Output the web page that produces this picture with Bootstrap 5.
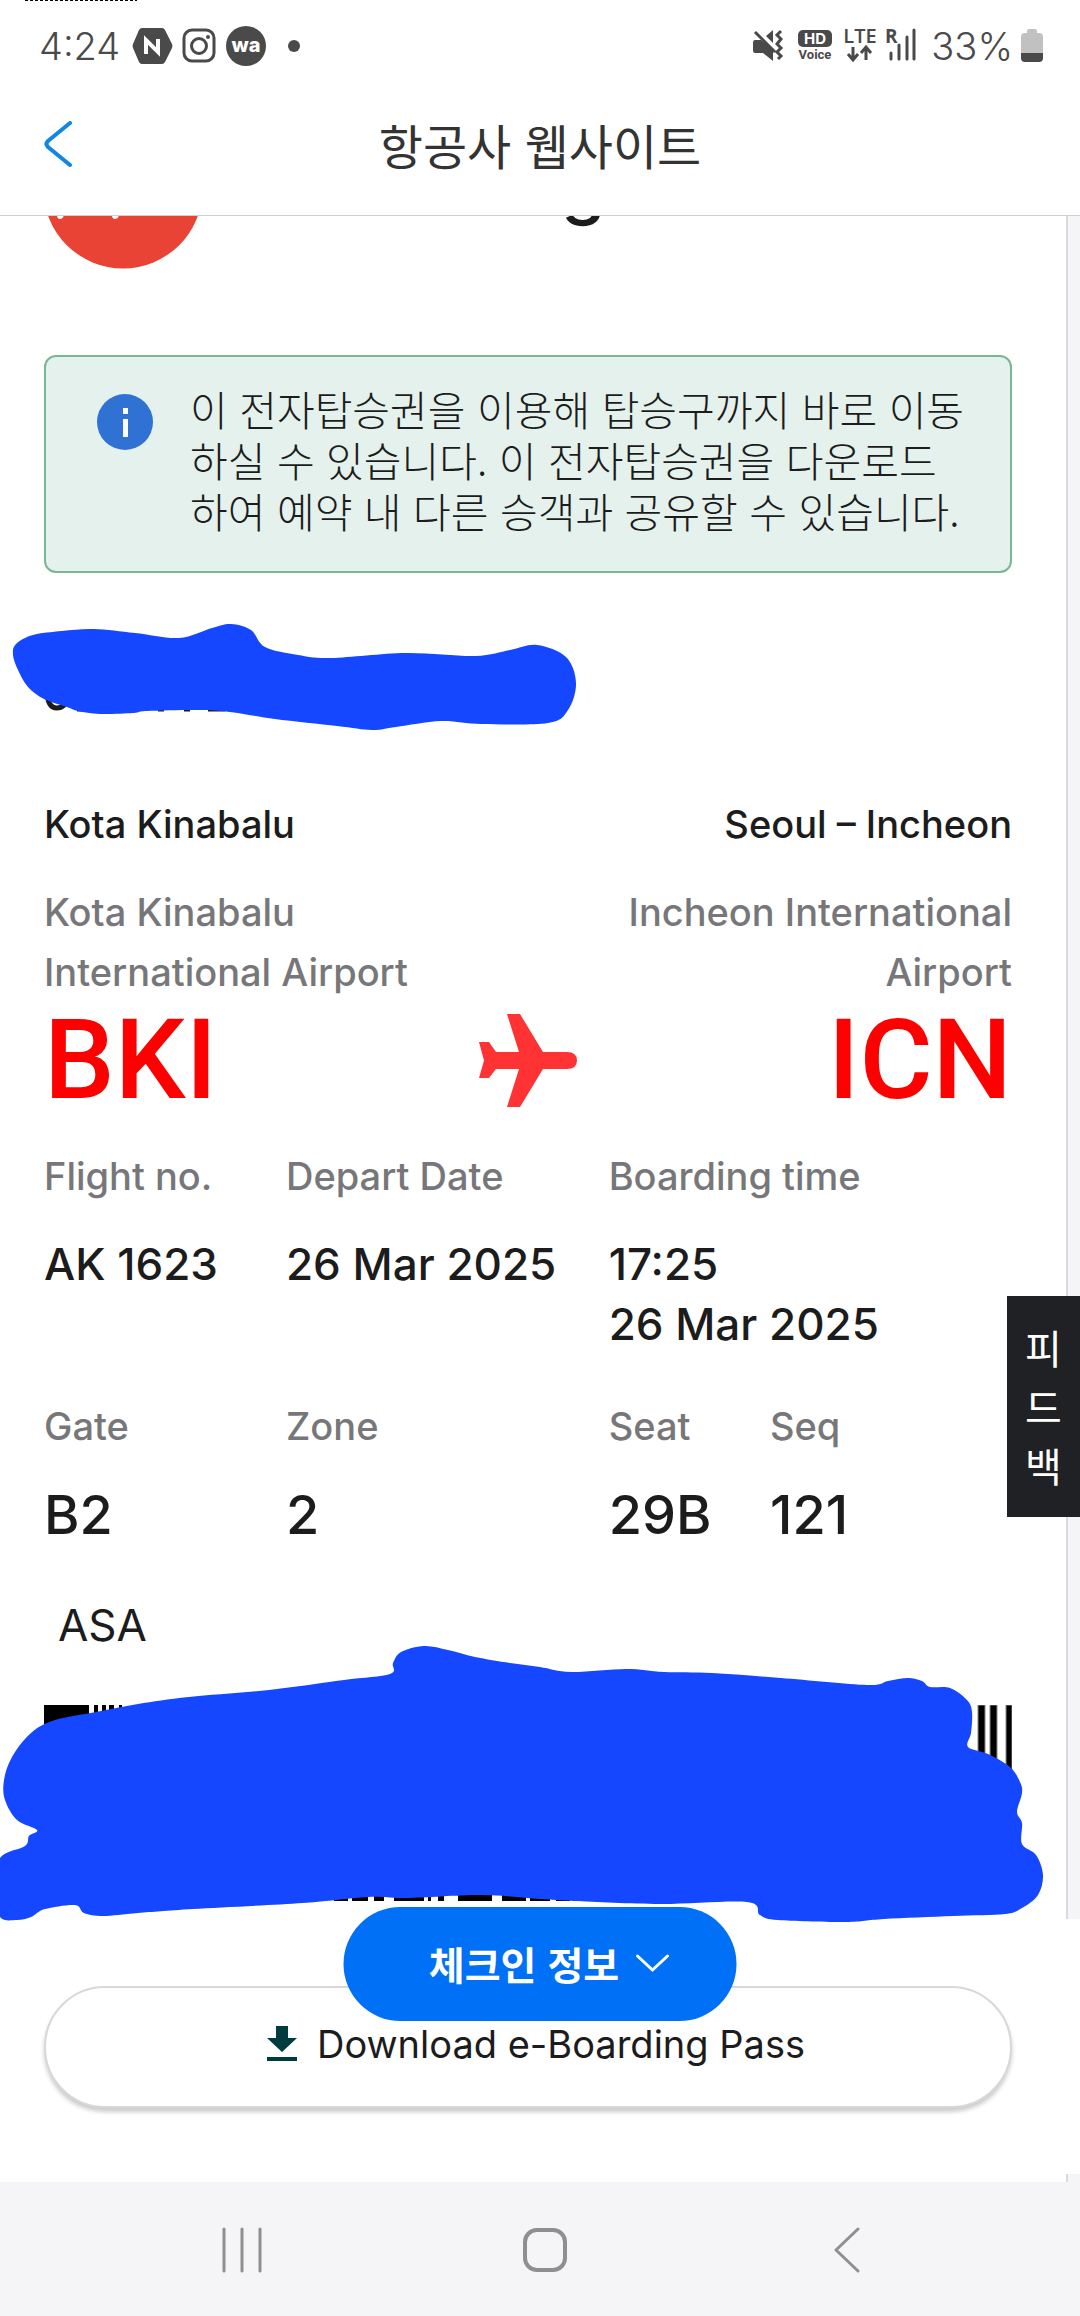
<!DOCTYPE html>
<html lang="ko">
<head>
<meta charset="utf-8">
<meta name="viewport" content="width=device-width, initial-scale=1">
<title>항공사 웹사이트</title>
<link href="https://cdn.jsdelivr.net/npm/bootstrap@5.3.0/dist/css/bootstrap.min.css" rel="stylesheet">
<style>
body{font-family:Inter,"Noto Sans CJK KR",sans-serif;font-size:38px;line-height:60px;color:#1c1c1c;background:#fff;overflow-x:hidden}
svg{display:block;flex:none}
.status-row{height:92px;padding:0 37px 0 39px;color:#4a4a4a;position:relative}
.status-text{font-size:38px;font-weight:300;line-height:48px}
.status-gap{gap:12px}
.edge-ticks{position:absolute;left:25px;top:0;width:112px;height:1px;background:repeating-linear-gradient(90deg,#000 0 3px,#fff 3px 5px)}
.title-row{height:124px;border-bottom:1px solid #d0d0d2;padding:0 44px 20px}
.title-row h1{font-family:"Noto Sans CJK KR",sans-serif;font-size:48px;font-weight:400;line-height:60px;color:#333}
.back-btn{width:28px}
.page-body{overflow:hidden;padding-right:12px;background:#f5f5f7}
.sheet{background:#fff;border-right:2px solid #d9d9de;padding:0 54px 8px 44px}
.brand-row{height:140px}
.brand-row svg{margin-top:-1px}
.brand-tail{font-size:72px;font-weight:500;line-height:60px;margin-top:-61px;position:absolute;left:561px;top:0}
.note-box{background:#e5f1ec;border:2px solid #77b796;border-radius:12px;padding:26px 30px 34px 50px;min-height:218px}
.note-box svg{margin-top:10px}
.note-box p{font-family:"Noto Sans CJK KR",sans-serif;font-size:41px;font-weight:300;line-height:51px;margin-left:36px;white-space:nowrap}
.guest-name{height:144px;margin:77px 0 0}
.soft{color:#77777a}
.med{font-weight:500}
.air-code{font-family:Roboto,sans-serif;font-size:112px;font-weight:500;line-height:116px;color:#f00}
.route{margin-bottom:28px}
.val{font-size:44px;font-weight:500;line-height:60px}
.val-lg{font-size:54px;font-weight:500;line-height:62px}
.gap-28{margin-top:28px}
.gap-42{margin-top:42px}
.asa{font-size:44px;padding-left:14px;margin:49px 0 50px}
.bars{height:196px}
.dock{margin:18px -68px 0 -44px;padding:67px 68px 67px 44px;background:#fff;position:relative;height:255px}
.dl-btn{height:122px;gap:20px;border:2px solid #d8d8da;border-radius:61px;background:#fff;box-shadow:0 4px 4px rgba(0,0,0,.2);color:#1c1c1c;padding:0 0 6px 16px;font-size:38px}
.info-btn{position:absolute;left:50%;top:-12px;transform:translateX(-50%);width:393px;height:114px;border:0;border-radius:57px;background:#0070f7;color:#fff;font-family:"Noto Sans CJK KR",sans-serif;font-weight:700;font-size:39px;padding:0 0 2px 18px;z-index:3}
.feedback{position:absolute;right:0;top:1080px;width:73px;height:221px;border:0;padding:22px 0;background:#202124;color:#fff;font-family:"Noto Sans CJK KR",sans-serif;font-size:40px;line-height:59px;z-index:3}
.marker{position:absolute;left:0;top:0;z-index:2;pointer-events:none}
.sys-nav{height:135px;background:#f5f5f8;padding:0 210px 0 219px}
.sys-nav button,.back-btn{border:0;background:none;padding:0}
</style>
<script src="https://cdn.jsdelivr.net/npm/bootstrap@5.3.0/dist/js/bootstrap.bundle.min.js"></script>
</head>
<body>
<div class="d-flex flex-column min-vh-100 position-relative">
<div class="status-row d-flex align-items-center justify-content-between">
<div class="edge-ticks"></div>
<div class="d-flex align-items-center status-gap">
<span class="status-text">4:24</span>
<svg width="174" height="42" viewBox="0 0 174 42">
<path fill="#4a4a4a" d="M10 3h20q2 0 3 2l7 14q1 2 0 4l-7 14q-1 2-3 2H10q-2 0-3-2L1 23q-1-2 0-4L7 5q1-2 3-2z"/>
<path d="M14 29V15l12 12V14" fill="none" stroke="#fff" stroke-width="4"/>
<rect x="52" y="5" width="30" height="31" rx="8" fill="none" stroke="#4a4a4a" stroke-width="3"/><circle cx="67" cy="21" r="7.500" fill="none" stroke="#4a4a4a" stroke-width="3"/><circle cx="76" cy="12" r="2" fill="#4a4a4a"/>
<circle cx="114" cy="21" r="20" fill="#4a4a4a"/><text x="114" y="27" text-anchor="middle" font-size="20" font-weight="800" fill="#fff">wa</text>
<circle cx="162" cy="21" r="6" fill="#4a4a4a"/>
</svg>
</div>
<div class="d-flex align-items-center status-gap">
<svg width="166" height="36" viewBox="0 0 166 36" fill="#4a4a4a">
<path d="M2 12h6l12 10v11L10 25H2q-2 0-2-3v-7q0-3 2-3zM13 8l7-6v13z"/>
<path d="M2 4l20 20M28 3l-4 4 4 4-4 5 4 4-4 4 4 4-3 3" fill="none" stroke="#4a4a4a" stroke-width="3"/>
<rect x="45" y="2" width="34" height="17" rx="5"/><text x="62" y="16" text-anchor="middle" font-size="15" font-weight="700" fill="#fff">HD</text>
<text x="62" y="31" text-anchor="middle" font-size="13" font-weight="700" style="font-family:Roboto,sans-serif">Voice</text>
<text x="107" y="15" text-anchor="middle" font-size="20" font-weight="600" style="font-family:'Open Sans',sans-serif">LTE</text>
<path d="M100 19v12M95 26l5 6 5-6M113 32V20M108 25l5-6 5 6" fill="none" stroke="#4a4a4a" stroke-width="3"/>
<text x="132" y="15" font-size="19" font-weight="700" style="font-family:'Open Sans',sans-serif">R</text>
<path d="M138 25v6M146 17v14M154 9v22M161 2v29" stroke="#4a4a4a" stroke-width="3" stroke-linecap="round"/>
</svg>
<div class="d-flex align-items-center gap-2"><span class="status-text">33%</span>
<svg width="22" height="34" viewBox="0 0 22 34"><path d="M6 4V2q0-2 2-2h6q2 0 2 2v2h2q4 0 4 4v18H0V8q0-4 4-4z" fill="#c1c1c1"/><path d="M0 24h22v5q0 4-4 4H4q-4 0-4-4z" fill="#4a4a4a"/></svg></div>
</div>
</div>
<header class="title-row d-flex align-items-center justify-content-between">
<button class="back-btn" aria-label="뒤로"><svg width="28" height="46" viewBox="0 0 28 46"><path d="M26 2L4 20q-3 3 0 6l22 18" fill="none" stroke="#1187e5" stroke-width="4" stroke-linecap="round"/></svg></button>
<h1 class="m-0">항공사 웹사이트</h1>
<span class="back-btn"></span>
</header>
<main class="page-body position-relative">
<div class="sheet">
<div class="brand-row"><svg width="160" height="54" viewBox="0 0 160 54"><circle cx="79" cy="-26" r="79.500" fill="#e84335"/><path d="M13 0h7q-1 4-4 4t-3-4zM68 0h7q-1 4-4 4t-3-4z" fill="#fff"/></svg><span class="brand-tail">g</span></div>
<div class="note-box d-flex align-items-start">
<svg width="58" height="58" viewBox="0 0 58 58"><circle cx="29" cy="29" r="28" fill="#2f72d3"/><path d="M27 15h5v6h-5zM27 26h5v18h-5z" fill="#fff"/></svg>
<p class="mb-0">이 전자탑승권을 이용해 탑승구까지 바로 이동<br>하실 수 있습니다. 이 전자탑승권을 다운로드<br>하여 예약 내 다른 승객과 공유할 수 있습니다.</p>
</div>
<div class="guest-name"><svg width="200" height="66" viewBox="0 0 200 66"><path d="M3 40q0 18 10 18 8 0 10-10M33 59h6M114 59h6M140 59h6M164 59h17" fill="none" stroke="#1c1c1c" stroke-width="5"/></svg></div>
<div class="d-flex justify-content-between med"><span>Kota Kinabalu</span><span>Seoul – Incheon</span></div>
<div class="d-flex justify-content-between med soft gap-28"><span>Kota Kinabalu<br>International Airport</span><span class="text-end">Incheon International<br>Airport</span></div>
<div class="route d-flex align-items-center">
<span class="air-code col">BKI</span>
<svg width="98" height="93" viewBox="0 0 98 93"><path fill="#f33" d="M0 28h10l7 10h23L28 0h13l23 38h24q10 0 10 8.500T88 55H64L41 93H28l12-38H17l-7 9H0l5-17.500z"/></svg>
<span class="air-code col text-end">ICN</span>
</div>
<div class="row gx-0">
<div class="col-3"><div class="soft med">Flight no.</div><div class="val gap-28">AK 1623</div></div>
<div class="col-4"><div class="soft med">Depart Date</div><div class="val gap-28">26 Mar 2025</div></div>
<div class="col-5"><div class="soft med">Boarding time</div><div class="val gap-28">17:25<br>26 Mar 2025</div></div>
</div>
<div class="row gx-0 gap-42">
<div class="col-3"><div class="soft med">Gate</div><div class="val-lg gap-28">B2</div></div>
<div class="col-4"><div class="soft med">Zone</div><div class="val-lg gap-28">2</div></div>
<div class="col-2"><div class="soft med">Seat</div><div class="val-lg gap-28">29B</div></div>
<div class="col-3"><div class="soft med">Seq</div><div class="val-lg gap-28">121</div></div>
</div>
<div class="asa">ASA</div>
<svg class="bars w-100" viewBox="0 0 968 196" preserveAspectRatio="none"><path d="M0 0h45v40H0zM50 0h4v30h-4zM58 0h4v30h-4zM65 0h5v30h-5zM75 0h3v30h-3zM290 180h14v16h-14zM308 180h16v16h-16zM330 180h10v16h-10zM350 180h30v16h-30zM384 180h3v16h-3zM394 180h6v16h-6zM414 180h34v16h-34zM458 180h24v16h-24zM486 180h20v16h-20zM512 180h14v16h-14z"/><path d="M934 0h7v80h-7zM946 0h7v80h-7zM962 0h6v80h-6z" stroke="#888" stroke-width="1"/></svg>
<div class="dock">
<button class="info-btn d-flex align-items-center justify-content-center"><span>체크인 정보</span><svg class="ms-3" width="34" height="20" viewBox="0 0 34 20"><path d="M2 3l15 14L32 3" fill="none" stroke="#fff" stroke-width="3" stroke-linecap="round"/></svg></button>
<button class="dl-btn w-100 d-flex align-items-center justify-content-center"><svg width="30" height="36" viewBox="0 0 30 36"><path d="M9 0h12v12h9L15 26 0 12h9zM0 31h30v4H0z" fill="#003b40"/></svg>Download e-Boarding Pass</button>
</div>
</div>
<button class="feedback">피<br>드<br>백</button>
<svg class="marker" width="1080" height="1720" viewBox="0 216 1080 1720" fill="#1447ff">
<path data-points="33,635 62,631 94,629 135,633 179,638 212,628 231,624 251,630 265,647 298,655 331,658 406,653 475,656 510,650 537,645 566,657 576,683 568,710 548,723 482,724 441,721 396,727 372,730 337,726 275,719 230,712 200,710 147,711 133,713 100,714 78,711 67,707 44,699 28,687 18,670 13,655 16,644"/>
<path data-points="390,1674 393,1663 401,1652 424,1646 448,1650 475,1657 510,1663 540,1667 571,1672 626,1669 664,1672 712,1673 781,1678 867,1685 888,1681 908,1678 922,1681 930,1687 950,1688 967,1700 972,1712 971,1733 968,1747 988,1754 1010,1767 1020,1782 1022,1793 1017,1812 1022,1823 1022,1844 1036,1855 1043,1875 1038,1895 1022,1908 1005,1914 953,1916 884,1919 846,1922 778,1920 760,1915 747,1902 660,1904 574,1901 540,1899 482,1895 406,1898 368,1897 303,1903 193,1909 138,1913 103,1916 84,1913 75,1905 45,1909 31,1917 17,1920 0,1917 -6,1890 0,1858 25,1846 29,1836 37,1830 17,1820 5,1800 4,1780 12,1757 31,1733 55,1720 96,1712 138,1704 189,1697 269,1690 344,1680"/>
</svg>
</main>
<nav class="sys-nav d-flex align-items-center justify-content-between">
<button aria-label="최근 앱"><svg width="46" height="46" viewBox="-1 0 46 46"><path d="M4 2v42M22 2v42M40 2v42" stroke="#8f8f92" stroke-width="3" stroke-linecap="round"/></svg></button>
<button aria-label="홈"><svg width="46" height="46" viewBox="0 0 46 46"><rect x="3" y="3" width="40" height="40" rx="12" fill="none" stroke="#8f8f92" stroke-width="4"/></svg></button>
<button aria-label="이전"><svg width="46" height="46" viewBox="-10 0 46 46"><path d="M24 2L2 23l22 21" fill="none" stroke="#8f8f92" stroke-width="3" stroke-linecap="round" stroke-linejoin="round"/></svg></button>
</nav>
</div>
<script>
// Join the marker stroke points with a smooth closed curve
document.querySelectorAll('[data-points]').forEach(function (el) {
  var p = el.dataset.points.split(' ').map(function (s) { return s.split(',').map(Number); });
  var n = p.length, d = 'M' + p[0];
  for (var i = 0; i < n; i++) {
    var a = p[(i + n - 1) % n], b = p[i], c = p[(i + 1) % n], e = p[(i + 2) % n];
    d += 'C' + [b[0] + (c[0] - a[0]) / 6, b[1] + (c[1] - a[1]) / 6, c[0] - (e[0] - b[0]) / 6, c[1] - (e[1] - b[1]) / 6, c[0], c[1]].join(' ');
  }
  el.setAttribute('d', d + 'Z');
});
</script>
</body>
</html>
